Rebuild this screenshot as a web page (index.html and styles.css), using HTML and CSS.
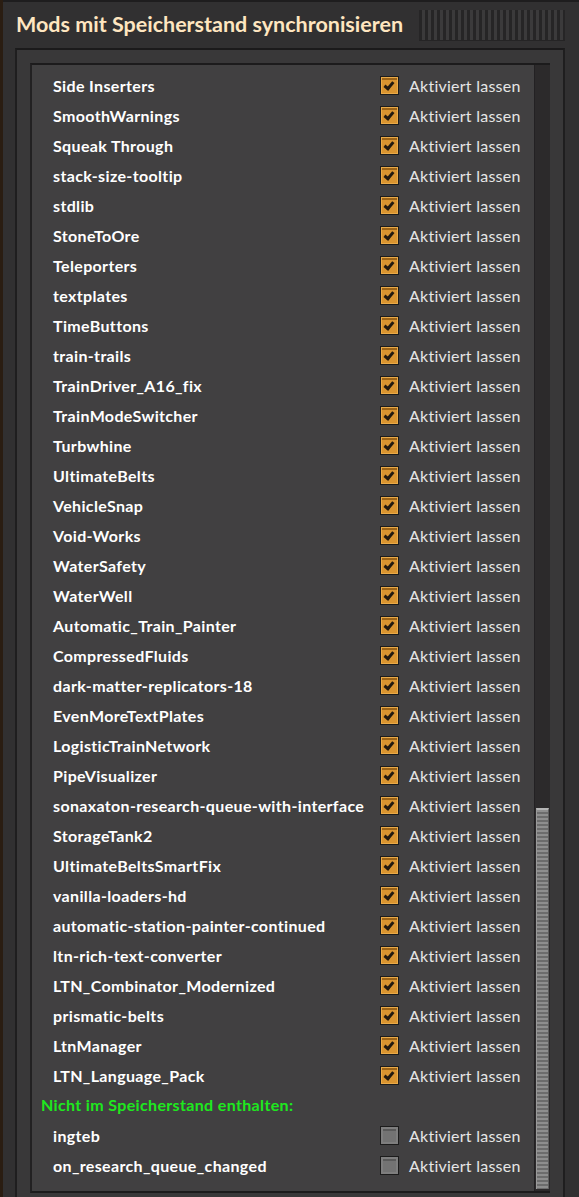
FILE: index.html
```html
<!DOCTYPE html>
<html lang="de">
<head>
<meta charset="utf-8">
<title>Mods mit Speicherstand synchronisieren</title>
<link rel="stylesheet" href="styles.css">
</head>
<body>
<div class="window">
  <div class="titlebar">
    <h1 class="title">Mods mit Speicherstand synchronisieren</h1>
    <div class="handle"></div>
  </div>
  <div class="deep-frame">
    <div class="list-box">
      <div class="list">
        <div class="row"><span class="name">Side Inserters</span><span class="cb on"></span><span class="label">Aktiviert lassen</span></div>
        <div class="row"><span class="name">SmoothWarnings</span><span class="cb on"></span><span class="label">Aktiviert lassen</span></div>
        <div class="row"><span class="name">Squeak Through</span><span class="cb on"></span><span class="label">Aktiviert lassen</span></div>
        <div class="row"><span class="name">stack-size-tooltip</span><span class="cb on"></span><span class="label">Aktiviert lassen</span></div>
        <div class="row"><span class="name">stdlib</span><span class="cb on"></span><span class="label">Aktiviert lassen</span></div>
        <div class="row"><span class="name">StoneToOre</span><span class="cb on"></span><span class="label">Aktiviert lassen</span></div>
        <div class="row"><span class="name">Teleporters</span><span class="cb on"></span><span class="label">Aktiviert lassen</span></div>
        <div class="row"><span class="name">textplates</span><span class="cb on"></span><span class="label">Aktiviert lassen</span></div>
        <div class="row"><span class="name">TimeButtons</span><span class="cb on"></span><span class="label">Aktiviert lassen</span></div>
        <div class="row"><span class="name">train-trails</span><span class="cb on"></span><span class="label">Aktiviert lassen</span></div>
        <div class="row"><span class="name">TrainDriver_A16_fix</span><span class="cb on"></span><span class="label">Aktiviert lassen</span></div>
        <div class="row"><span class="name">TrainModeSwitcher</span><span class="cb on"></span><span class="label">Aktiviert lassen</span></div>
        <div class="row"><span class="name">Turbwhine</span><span class="cb on"></span><span class="label">Aktiviert lassen</span></div>
        <div class="row"><span class="name">UltimateBelts</span><span class="cb on"></span><span class="label">Aktiviert lassen</span></div>
        <div class="row"><span class="name">VehicleSnap</span><span class="cb on"></span><span class="label">Aktiviert lassen</span></div>
        <div class="row"><span class="name">Void-Works</span><span class="cb on"></span><span class="label">Aktiviert lassen</span></div>
        <div class="row"><span class="name">WaterSafety</span><span class="cb on"></span><span class="label">Aktiviert lassen</span></div>
        <div class="row"><span class="name">WaterWell</span><span class="cb on"></span><span class="label">Aktiviert lassen</span></div>
        <div class="row"><span class="name">Automatic_Train_Painter</span><span class="cb on"></span><span class="label">Aktiviert lassen</span></div>
        <div class="row"><span class="name">CompressedFluids</span><span class="cb on"></span><span class="label">Aktiviert lassen</span></div>
        <div class="row"><span class="name">dark-matter-replicators-18</span><span class="cb on"></span><span class="label">Aktiviert lassen</span></div>
        <div class="row"><span class="name">EvenMoreTextPlates</span><span class="cb on"></span><span class="label">Aktiviert lassen</span></div>
        <div class="row"><span class="name">LogisticTrainNetwork</span><span class="cb on"></span><span class="label">Aktiviert lassen</span></div>
        <div class="row"><span class="name">PipeVisualizer</span><span class="cb on"></span><span class="label">Aktiviert lassen</span></div>
        <div class="row"><span class="name">sonaxaton-research-queue-with-interface</span><span class="cb on"></span><span class="label">Aktiviert lassen</span></div>
        <div class="row"><span class="name">StorageTank2</span><span class="cb on"></span><span class="label">Aktiviert lassen</span></div>
        <div class="row"><span class="name">UltimateBeltsSmartFix</span><span class="cb on"></span><span class="label">Aktiviert lassen</span></div>
        <div class="row"><span class="name">vanilla-loaders-hd</span><span class="cb on"></span><span class="label">Aktiviert lassen</span></div>
        <div class="row"><span class="name">automatic-station-painter-continued</span><span class="cb on"></span><span class="label">Aktiviert lassen</span></div>
        <div class="row"><span class="name">ltn-rich-text-converter</span><span class="cb on"></span><span class="label">Aktiviert lassen</span></div>
        <div class="row"><span class="name">LTN_Combinator_Modernized</span><span class="cb on"></span><span class="label">Aktiviert lassen</span></div>
        <div class="row"><span class="name">prismatic-belts</span><span class="cb on"></span><span class="label">Aktiviert lassen</span></div>
        <div class="row"><span class="name">LtnManager</span><span class="cb on"></span><span class="label">Aktiviert lassen</span></div>
        <div class="row"><span class="name">LTN_Language_Pack</span><span class="cb on"></span><span class="label">Aktiviert lassen</span></div>
        <div class="section">Nicht im Speicherstand enthalten:</div>
        <div class="row"><span class="name">ingteb</span><span class="cb"></span><span class="label">Aktiviert lassen</span></div>
        <div class="row"><span class="name">on_research_queue_changed</span><span class="cb"></span><span class="label">Aktiviert lassen</span></div>
      </div>
      <div class="scrollbar"><div class="thumb"></div></div>
    </div>
  </div>
</div>
</body>
</html>
```
FILE: styles.css
```css
html, body {
  margin: 0;
  padding: 0;
  height: 100%;
  overflow: hidden;
  background: #2a1d12;
}

.window {
  box-sizing: border-box;
  height: 1197px;
  margin-left: 3px;
  border-top: 2px solid #1e1d1e;
  background: #313031;
  padding: 0 14px 0 12px;
}

.titlebar {
  display: flex;
  align-items: center;
  height: 46px;
  gap: 16px;
}

.title {
  margin: 0 0 0 1px;
  font-family: Lato, "Noto Sans", sans-serif;
  font-weight: 700;
  font-size: 21.5px;
  color: #ffe6c0;
  white-space: nowrap;
  line-height: 1;
}

.handle {
  flex: 1;
  height: 30px;
  background: repeating-linear-gradient(90deg, #262526 0 3px, #3b3a3b 3px 6px);
  border-bottom: 1px solid #252425;
}

.deep-frame {
  box-sizing: border-box;
  height: 1160px;
  background: #393839;
  border-top: 2px solid #1b1a1b;
  border-left: 2px solid #1f1e1f;
  border-right: 2px solid #1f1e1f;
  padding: 13px 13px 0 13px;
}

.list-box {
  display: flex;
  height: 1126px;
  background: #414041;
  border-top: 2px solid #1c1b1c;
  border-left: 2px solid #222122;
  border-bottom: 2px solid #1c1b1c;
  overflow: hidden;
}

.list {
  flex: 1;
  padding: 5px 0 0 21px;
}

.row {
  display: flex;
  align-items: center;
  height: 30px;
}

.name {
  width: 327px;
  font-family: Lato, "Noto Sans", sans-serif;
  font-weight: 700;
  font-size: 16px;
  letter-spacing: 0.35px;
  color: #ffffff;
  white-space: nowrap;
}

.label {
  margin-left: 10px;
  font-family: Lato, "Noto Sans", sans-serif;
  font-size: 16px;
  letter-spacing: 0.25px;
  color: #e6e6e6;
  white-space: nowrap;
}

.cb {
  position: relative;
  box-sizing: border-box;
  width: 19px;
  height: 19px;
  border: 1px solid #1c1c1c;
  background: #737373;
  box-shadow: inset 0 0 0 2px #7e7e7e, inset 0 2px 0 2px #5a5a5a;
}

.cb.on {
  background: #d99430;
  box-shadow: inset 0 0 0 1px #e9aa48, inset 0 2px 0 1px #9c6418;
}

.cb.on::after {
  content: "";
  position: absolute;
  left: 5px;
  top: 3px;
  width: 3px;
  height: 7px;
  border: solid #221a10;
  border-width: 0 3px 3px 0;
  transform: rotate(40deg);
}

.section {
  height: 30px;
  line-height: 30px;
  margin-left: -12px;
  font-family: Lato, "Noto Sans", sans-serif;
  font-weight: 700;
  font-size: 16px;
  letter-spacing: 0.35px;
  color: #1ee81e;
}

.scrollbar {
  width: 15px;
  background: #2c2a2b;
  border-left: 1px solid #232123;
  position: relative;
}

.thumb {
  position: absolute;
  left: 1px;
  width: 11px;
  top: 743px;
  bottom: 2px;
  background: repeating-linear-gradient(180deg, #8e8e8e 0 2px, #6c6c6c 2px 4px);
  border-top: 2px solid #b4b4b4;
  border-left: 1px solid #9a9a9a;
  border-right: 1px solid #5e5e5e;
}
```
